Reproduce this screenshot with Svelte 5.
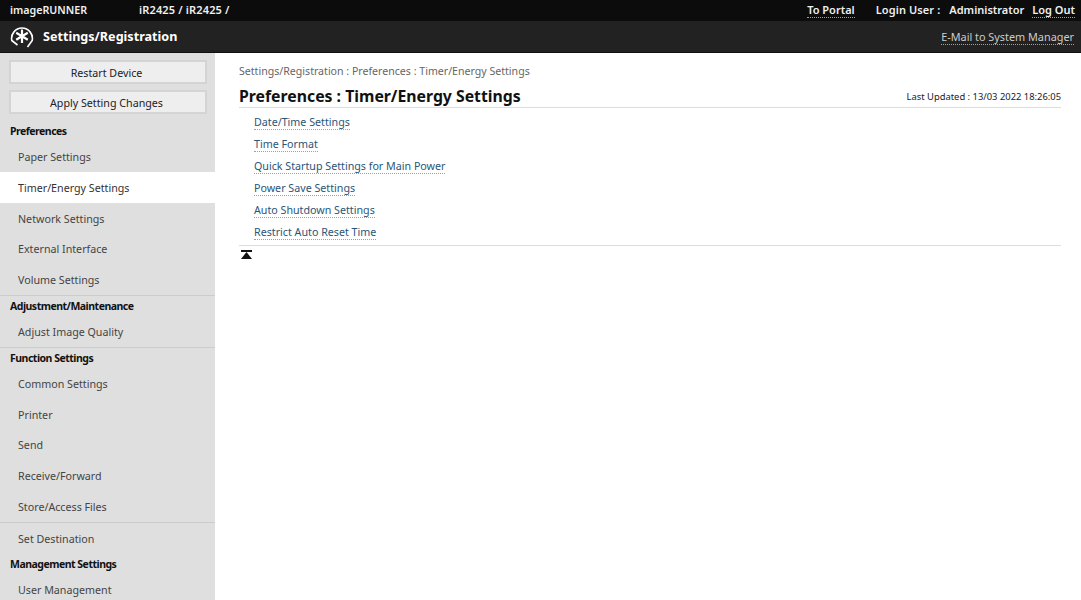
<script>
  const groups = [
    { title: "Preferences", items: ["Paper Settings", "Timer/Energy Settings", "Network Settings", "External Interface", "Volume Settings"] },
    { title: "Adjustment/Maintenance", items: ["Adjust Image Quality"] },
    { title: "Function Settings", items: ["Common Settings", "Printer", "Send", "Receive/Forward", "Store/Access Files"] },
    { title: "", items: ["Set Destination"] },
    { title: "Management Settings", items: ["User Management"] },
  ];
  const links = [
    "Date/Time Settings",
    "Time Format",
    "Quick Startup Settings for Main Power",
    "Power Save Settings",
    "Auto Shutdown Settings",
    "Restrict Auto Reset Time",
  ];
</script>

<div class="page">
  <header>
    <div class="topbar">
      <span class="product">imageRUNNER</span>
      <span class="device">iR2425 / iR2425 /</span>
      <a class="portal" href="#top">To Portal</a>
      <span class="user">Login User :</span>
      <span class="admin">Administrator</span>
      <a href="#top">Log Out</a>
    </div>
    <div class="titlebar">
      <svg class="logo" width="24" height="24" viewBox="0 0 24 24" fill="none" stroke="#fff">
        <path d="M7.500 20 L1.800 15.500 A10.400 10.400 0 1 1 22.200 15.500 L17.500 22" stroke-width="1.600" stroke-linejoin="round" />
        <path d="M12 4.500 V18 M6.200 7.800 L17.800 14.700 M17.800 7.800 L6.200 14.700" stroke-width="2.200" />
      </svg>
      <span class="title">Settings/Registration</span>
      <a class="mail" href="#top">E-Mail to System Manager</a>
    </div>
  </header>

  <div class="body">
    <nav>
      <div class="buttons">
        <button>Restart Device</button>
        <button>Apply Setting Changes</button>
      </div>
      {#each groups as group}
        <section class:plain={!group.title}>
          {#if group.title}<h3>{group.title}</h3>{/if}
          {#each group.items as item}
            <div class="item" class:active={item === "Timer/Energy Settings"}>{item}</div>
          {/each}
        </section>
      {/each}
    </nav>

    <main>
      <p class="crumb">Settings/Registration : Preferences : Timer/Energy Settings</p>
      <div class="heading">
        <h1>Preferences : Timer/Energy Settings</h1>
        <span class="updated">Last Updated : 13/03 2022 18:26:05</span>
      </div>
      <ul>
        {#each links as link}
          <li><a href="#top">{link}</a></li>
        {/each}
      </ul>
      <div class="foot">
        <svg width="11" height="9" viewBox="0 0 11 9" fill="#111">
          <rect x="0" y="0" width="11" height="2" />
          <path d="M5.500 2 L11 9 H0 Z" />
        </svg>
      </div>
    </main>
  </div>
</div>

<style>
  :global(body) {
    margin: 0;
    overflow: hidden;
    background: #fff;
  }
  .page {
    width: 1081px;
    height: 600px;
    overflow: hidden;
    font-family: "Noto Sans", "Open Sans", sans-serif;
    font-size: 10.700px;
    color: #333;
  }
  a {
    color: inherit;
    text-decoration: none;
    border-bottom: 1px dotted #8aa;
  }
  .topbar {
    height: 21px;
    box-sizing: border-box;
    background: #0c0c0c;
    color: #f0f0f0;
    display: flex;
    align-items: center;
    padding: 0 6px 2px 10px;
    font-weight: 600;
    font-size: 11px;
  }
  .product {
    width: 129px;
    font-size: 10.700px;
  }
  .device {
    letter-spacing: 0.150px;
  }
  .portal {
    margin-left: auto;
    margin-right: 21px;
  }
  .user {
    margin-right: 9px;
    letter-spacing: 0.100px;
  }
  .admin {
    margin-right: 8px;
    font-size: 11px;
  }
  .titlebar {
    height: 32px;
    box-sizing: border-box;
    background: #222;
    border-bottom: 1px solid #111;
    color: #fff;
    display: flex;
    align-items: center;
    padding: 0 7px 0 10px;
  }
  .logo {
    margin-right: 9px;
  }
  .title {
    font-size: 12.600px;
    font-weight: 700;
  }
  .mail {
    margin-left: auto;
    color: #ccc;
    font-size: 10.850px;
  }
  .body {
    display: flex;
    height: 547px;
  }
  nav {
    width: 215px;
    flex: none;
    background: #dfdfdf;
    overflow: hidden;
  }
  .buttons {
    padding: 7px 8px 0 9px;
    display: flex;
    flex-direction: column;
    gap: 6px;
  }
  button {
    height: 24px;
    padding: 1px 3px 0 0;
    background: #eee;
    border: 2px solid #d4d4d4;
    color: #222;
    font: inherit;
  }
  section {
    border-bottom: 1px solid #ccc;
  }
  section:first-of-type {
    margin-top: 7px;
  }
  section:last-child {
    border-bottom: 0;
  }
  section.plain {
    border-bottom: 0;
  }
  h3 {
    margin: 0;
    height: 20px;
    line-height: 20px;
    padding-left: 10px;
    font-size: 10.500px;
    letter-spacing: -0.500px;
    font-weight: 700;
    color: #111;
  }
  .item {
    height: 30.800px;
    line-height: 32.800px;
    padding-left: 18px;
    color: #444;
  }
  .item.active {
    background: #fff;
    color: #333;
  }
  main {
    flex: 1;
    padding: 0 20px 0 24px;
  }
  .crumb {
    margin: 11px 0 0;
    height: 16px;
    line-height: 14px;
    font-size: 10.600px;
    color: #666;
  }
  .heading {
    display: flex;
    justify-content: space-between;
    align-items: flex-end;
    height: 27px;
    border-bottom: 1px solid #ddd;
  }
  h1 {
    margin: 0;
    font-size: 15.800px;
    line-height: 22px;
    font-weight: 700;
    color: #111;
  }
  .updated {
    font-size: 9.400px;
    line-height: 20px;
    color: #222;
  }
  ul {
    list-style: none;
    margin: 0;
    padding: 3px 0 2px 15px;
    border-bottom: 1px solid #ddd;
  }
  li {
    height: 22px;
    line-height: 22px;
    color: #2a5578;
  }
  .foot {
    padding: 0 0 0 2px;
    line-height: 0;
    margin-top: 4px;
  }
</style>
